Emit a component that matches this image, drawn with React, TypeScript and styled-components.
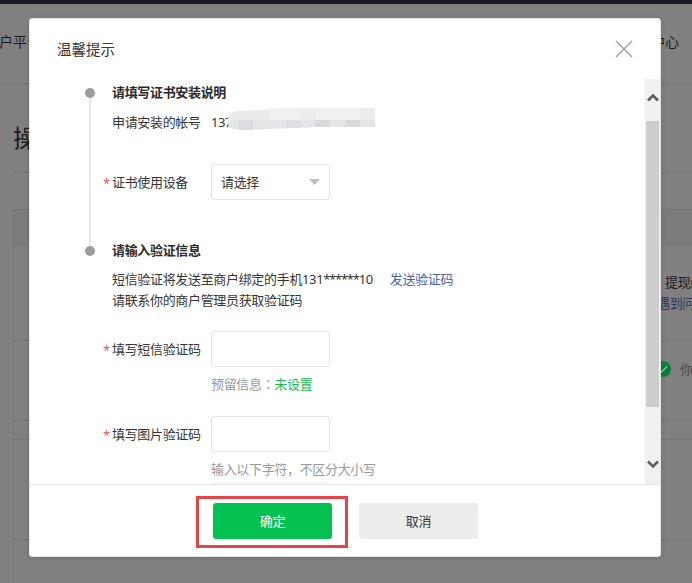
import React from "react";
import styled, { createGlobalStyle } from "styled-components";

const Global = createGlobalStyle`
  * { box-sizing: border-box; }
  html, body { margin: 0; padding: 0; overflow: hidden; }
  body { font-family: "Noto Sans", "Noto Sans CJK SC", sans-serif; font-size: 13px; color: #353535; }
  button { font: inherit; border: 0; padding: 0; }
`;

const Screen = styled.div`
  position: relative;
  width: 692px;
  height: 583px;
  overflow: hidden;
  background: #808080;
`;
const Page = styled.div`
  display: flex;
  flex-direction: column;
  height: 583px;
  color: #1b1b1b;
`;
const TopBar = styled.div`
  height: 4px;
  background: #1c1d21;
`;
const Header = styled.header`
  height: 80px;
  border-bottom: 1px solid #747474;
  display: flex;
  justify-content: space-between;
  align-items: center;
  padding: 0 13px 5px 0;
  font-size: 14px;
  white-space: nowrap;
`;
const HeaderText = styled.span<{ $shift?: number }>`
  margin-left: ${(p) => p.$shift ?? 0}px;
`;
const PageTitle = styled.h1`
  margin: 0 0 0 13px;
  height: 89px;
  padding-top: 38px;
  line-height: 32px;
  border-bottom: 1px solid #747474;
  font-size: 24px;
  font-weight: 400;
`;
const Table = styled.div`
  margin: 36px 0 0 13px;
  border-top: 1px solid #747474;
  border-left: 1px solid #747474;
  flex: 1;
`;
const Row = styled.div<{ $h: number; $head?: boolean }>`
  height: ${(p) => p.$h}px;
  border-bottom: 1px solid #747474;
  background: ${(p) => (p.$head ? "#7b7b7b" : "transparent")};
  display: flex;
  justify-content: flex-end;
  align-items: center;
  overflow: hidden;
`;
const SideNote = styled.div`
  width: 35px;
  height: 42px;
  line-height: 21px;
  white-space: nowrap;
  letter-spacing: -0.33px;
`;
const NoteLine = styled.div<{ $link?: boolean }>`
  color: ${(p) => (p.$link ? "#263760" : "#1b1b1b")};
  padding-left: ${(p) => (p.$link ? 0 : 8)}px;
`;
const Status = styled.div`
  width: 37px;
  height: 20px;
  display: flex;
  align-items: center;
  gap: 9px;
  margin-bottom: 24px;
  color: #4a4a4a;
  white-space: nowrap;
  svg { flex: none; }
`;

const Dialog = styled.section`
  position: absolute;
  left: 29px;
  top: 18px;
  width: 632px;
  height: 539px;
  background: #fff;
  border: 1px solid #e6e6e6;
  border-radius: 3px;
  box-shadow: 0 1px 5px rgba(0, 0, 0, 0.14);
  display: flex;
  flex-direction: column;
  overflow: hidden;
`;
const DialogHead = styled.header`
  height: 60px;
  padding: 0 27px 0 27px;
  display: flex;
  align-items: center;
  justify-content: space-between;
  font-size: 14.5px;
  color: #353535;
`;
const DialogTitle = styled.span`
  padding-bottom: 2px;
`;
const Body = styled.div`
  height: 405px;
  display: flex;
  overflow: hidden;
`;
const Timeline = styled.div`
  width: 10px;
  margin: 9px 0 0 55px;
  display: flex;
  flex-direction: column;
  align-items: center;
`;
const Dot = styled.i`
  width: 10px;
  height: 10px;
  border-radius: 50%;
  background: #9c9c9c;
`;
const Stem = styled.i`
  width: 2px;
  height: 148px;
  background: #e7e7e7;
`;
const Content = styled.div`
  flex: 1;
  padding-left: 17px;
  letter-spacing: -0.33px;
  white-space: nowrap;
`;
const StepTitle = styled.h2<{ $top: number }>`
  margin: ${(p) => p.$top}px 0 0;
  font-size: 13px;
  line-height: 20px;
  font-weight: 700;
  color: #2b2b2b;
`;
const Account = styled.div`
  margin-top: 10px;
  height: 21px;
  line-height: 20px;
  display: flex;
`;
const AccountLabel = styled.span`
  width: 99px;
`;
const AccountNumber = styled.span`
  width: 15px;
  overflow: visible;
  letter-spacing: -0.5px;
`;
const Smear = styled.svg`
  position: relative;
  flex: none;
  margin-top: -5px;
`;
const Field = styled.div<{ $top: number }>`
  margin: ${(p) => p.$top}px 0 0 -9px;
  height: 36px;
  display: flex;
  align-items: center;
`;
const Required = styled.span`
  width: 9px;
  padding-top: 2px;
  color: #df5a5a;
  line-height: 20px;
`;
const Label = styled.label`
  width: 99px;
  line-height: 20px;
  padding-bottom: 1px;
`;
const Input = styled.input`
  width: 119px;
  height: 36px;
  border: 1px solid #e4e4e4;
  border-radius: 3px;
  background: #fff;
  outline: 0;
`;
const Select = styled.button`
  width: 119px;
  height: 36px;
  border: 1px solid #e4e4e4;
  border-radius: 3px;
  background: #fff;
  display: flex;
  align-items: center;
  justify-content: space-between;
  padding: 0 9px;
  color: #353535;
  letter-spacing: -0.33px;
`;
const SelectText = styled.span`
  padding-bottom: 2px;
`;
const Message = styled.p`
  margin: 9px 0 0;
  line-height: 21px;
`;
const Link = styled.a`
  margin-left: 17px;
  color: #4863a5;
`;
const Digits = styled.span<{ $mask?: boolean }>`
  letter-spacing: ${(p) => (p.$mask ? -1.25 : -0.4)}px;
`;
const Hint = styled.div`
  margin: 7px 0 0 99px;
  height: 21px;
  line-height: 20px;
  color: #999;
`;
const Green = styled.span`
  color: #19b955;
`;
const Colon = styled.span`
  font-family: "Noto Sans CJK TC", sans-serif;
`;
const CaptchaEdge = styled.div`
  margin: 2px 0 0 99px;
  width: 117px;
  height: 6px;
  background: #f4f5f4;
`;
const ScrollBar = styled.div`
  width: 15px;
  margin-left: auto;
  background: #f0f0f0;
  display: flex;
  flex-direction: column;
  align-items: center;
`;
const Arrow = styled.div<{ $h: number; $end?: boolean }>`
  height: ${(p) => p.$h}px;
  display: flex;
  align-items: ${(p) => (p.$end ? "flex-end" : "flex-start")};
  padding: ${(p) => (p.$end ? "0 0 15px" : "14px 0 0")};
`;
const Thumb = styled.div`
  width: 13px;
  height: 286px;
  background: #cdcdcd;
`;
const Footer = styled.footer`
  flex: 1;
  border-top: 1px solid #e4e5e7;
  display: flex;
  align-items: flex-start;
  padding: 11px 0 0 166px;
  gap: 11px;
`;
const Highlight = styled.div`
  width: 152px;
  height: 52px;
  border: 3px solid #e64545;
  padding: 4px 0 0 14px;
`;
const Button = styled.button<{ $primary?: boolean }>`
  width: 119px;
  height: 36px;
  margin-top: ${(p) => (p.$primary ? 0 : 7)}px;
  padding-bottom: 2px;
  border-radius: 3px;
  background: ${(p) => (p.$primary ? "#04c251" : "#ededed")};
  color: ${(p) => (p.$primary ? "#fff" : "#353535")};
  letter-spacing: -0.2px;
`;

const Chevron = ({ down }: { down?: boolean }) => (
  <svg width="12" height="9" viewBox="0 0 12 9">
    <path d={down ? "M1 1.5 L6 6.5 L11 1.5" : "M1 7.5 L6 2.5 L11 7.5"} fill="none" stroke="#5e5e5e" strokeWidth="2.6" />
  </svg>
);

const Redaction = () => (
  <Smear width="150" height="24" viewBox="0 0 150 24">
    <defs>
      <clipPath id="smear">
        <path d="M2 12 Q3 4 14 4 L54 1 H149 V20 H90 L40 22 Q12 24 5 21 Q1 18 2 12Z" />
      </clipPath>
    </defs>
    <g clipPath="url(#smear)">
      <rect width="150" height="24" fill="#f0f0f1" />
      <rect y="13" width="150" height="11" fill="#e5e5e7" />
      <rect y="4" width="44" height="9" fill="#ebebed" />
      <rect x="12" y="13" width="15" height="11" fill="#dcdde0" />
      <rect x="60" y="13" width="15" height="11" fill="#dfdee0" />
      <rect x="75" y="1" width="15" height="12" fill="#ededee" />
      <rect x="89" y="13" width="15" height="11" fill="#dad8da" />
      <rect x="119" y="13" width="15" height="11" fill="#dad9db" />
      <rect x="134" y="1" width="15" height="12" fill="#ececed" />
    </g>
  </Smear>
);

export default function App() {
  return (
    <Screen>
      <Global />
      <Page>
        <TopBar />
        <Header>
          <HeaderText $shift={-1}>户平台</HeaderText>
          <HeaderText>中心</HeaderText>
        </Header>
        <PageTitle>操作</PageTitle>
        <Table>
          <Row $h={35} $head />
          <Row $h={96}>
            <SideNote>
              <NoteLine>提现给</NoteLine>
              <NoteLine $link>遇到问题</NoteLine>
            </SideNote>
          </Row>
          <Row $h={80}>
            <Status>
              <svg width="16" height="16" viewBox="0 0 16 16">
                <circle cx="8" cy="8" r="8" fill="#087f36" />
                <path d="M4 8.5 L6.5 11 L12 5.5" fill="none" stroke="#a9b9ae" strokeWidth="1.3" />
              </svg>
              你
            </Status>
          </Row>
          <Row $h={19} />
          <Row $h={100} />
        </Table>
      </Page>
      <Dialog>
        <DialogHead>
          <DialogTitle>温馨提示</DialogTitle>
          <svg width="18" height="18" viewBox="0 0 18 18">
            <path d="M1 1 L17 17 M17 1 L1 17" stroke="#9b9b9b" strokeWidth="1.3" fill="none" />
          </svg>
        </DialogHead>
        <Body>
          <Timeline>
            <Dot />
            <Stem />
            <Dot />
          </Timeline>
          <Content>
            <StepTitle $top={3}>请填写证书安装说明</StepTitle>
            <Account>
              <AccountLabel>申请安装的帐号</AccountLabel>
              <AccountNumber>137</AccountNumber>
              <Redaction />
            </Account>
            <Field $top={31}>
              <Required>*</Required>
              <Label>证书使用设备</Label>
              <Select>
                <SelectText>请选择</SelectText>
                <svg width="11" height="6" viewBox="0 0 11 6">
                  <path d="M0 0 H11 L5.5 6Z" fill="#bfbfbf" />
                </svg>
              </Select>
            </Field>
            <StepTitle $top={40}>请输入验证信息</StepTitle>
            <Message>
              短信验证将发送至商户绑定的手机
              <Digits>131</Digits>
              <Digits $mask>******</Digits>
              <Digits>10</Digits>
              <Link>发送验证码</Link>
              <br />
              请联系你的商户管理员获取验证码
            </Message>
            <Field $top={20}>
              <Required>*</Required>
              <Label>填写短信验证码</Label>
              <Input />
            </Field>
            <Hint>
              预留信息<Colon>：</Colon>
              <Green>未设置</Green>
            </Hint>
            <Field $top={21}>
              <Required>*</Required>
              <Label>填写图片验证码</Label>
              <Input />
            </Field>
            <Hint>输入以下字符，不区分大小写</Hint>
            <CaptchaEdge />
          </Content>
          <ScrollBar>
            <Arrow $h={42}><Chevron /></Arrow>
            <Thumb />
            <Arrow $h={77} $end><Chevron down /></Arrow>
          </ScrollBar>
        </Body>
        <Footer>
          <Highlight>
            <Button $primary>确定</Button>
          </Highlight>
          <Button>取消</Button>
        </Footer>
      </Dialog>
    </Screen>
  );
}
